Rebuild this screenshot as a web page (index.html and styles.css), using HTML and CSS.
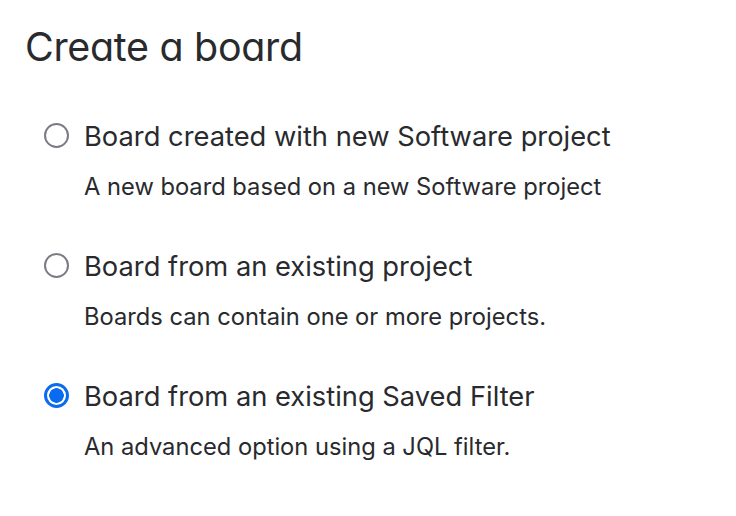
FILE: index.html
```html
<!DOCTYPE html>
<html>
<head>
<meta charset="utf-8">
<link rel="stylesheet" href="styles.css">
</head>
<body>
<main class="page">
  <h1 class="title">Create a board</h1>
  <div class="options">
    <label class="option">
      <span class="radio"></span>
      <span class="text">
        <span class="label">Board created with new Software project</span>
        <span class="desc">A new board based on a new Software project</span>
      </span>
    </label>
    <label class="option">
      <span class="radio"></span>
      <span class="text">
        <span class="label">Board from an existing project</span>
        <span class="desc">Boards can contain one or more projects.</span>
      </span>
    </label>
    <label class="option">
      <span class="radio checked"></span>
      <span class="text">
        <span class="label">Board from an existing Saved Filter</span>
        <span class="desc">An advanced option using a JQL filter.</span>
      </span>
    </label>
  </div>
</main>
</body>
</html>
```
FILE: styles.css
```css
* { box-sizing: border-box; }
html, body { margin: 0; background: #fff; }
body {
  font-family: Inter, "Noto Sans", sans-serif;
  color: #292a2e;
}
.page {
  padding: 23px 25px;
}
.title {
  margin: 0;
  font-size: 39.4px;
  font-weight: 400;
  line-height: 48px;
  letter-spacing: -0.3px;
  font-feature-settings: "cv11";
}
.options {
  display: flex;
  flex-direction: column;
  gap: 49px;
  margin-top: 50px;
  padding-left: 19px;
}
.option {
  display: flex;
  align-items: flex-start;
  gap: 15px;
}
.radio {
  flex: none;
  width: 25px;
  height: 25px;
  border: 2px solid #7a7c82;
  border-radius: 50%;
  margin-top: 2px;
}
.radio.checked {
  border: 3px solid #0b6bf0;
  background: radial-gradient(circle, #0b6bf0 0 7px, #fff 7.5px);
}
.text {
  display: flex;
  flex-direction: column;
  gap: 19px;
}
.label {
  font-size: 27.3px;
  line-height: 32px;
}
.desc {
  font-size: 23.7px;
  line-height: 30px;
}
```
